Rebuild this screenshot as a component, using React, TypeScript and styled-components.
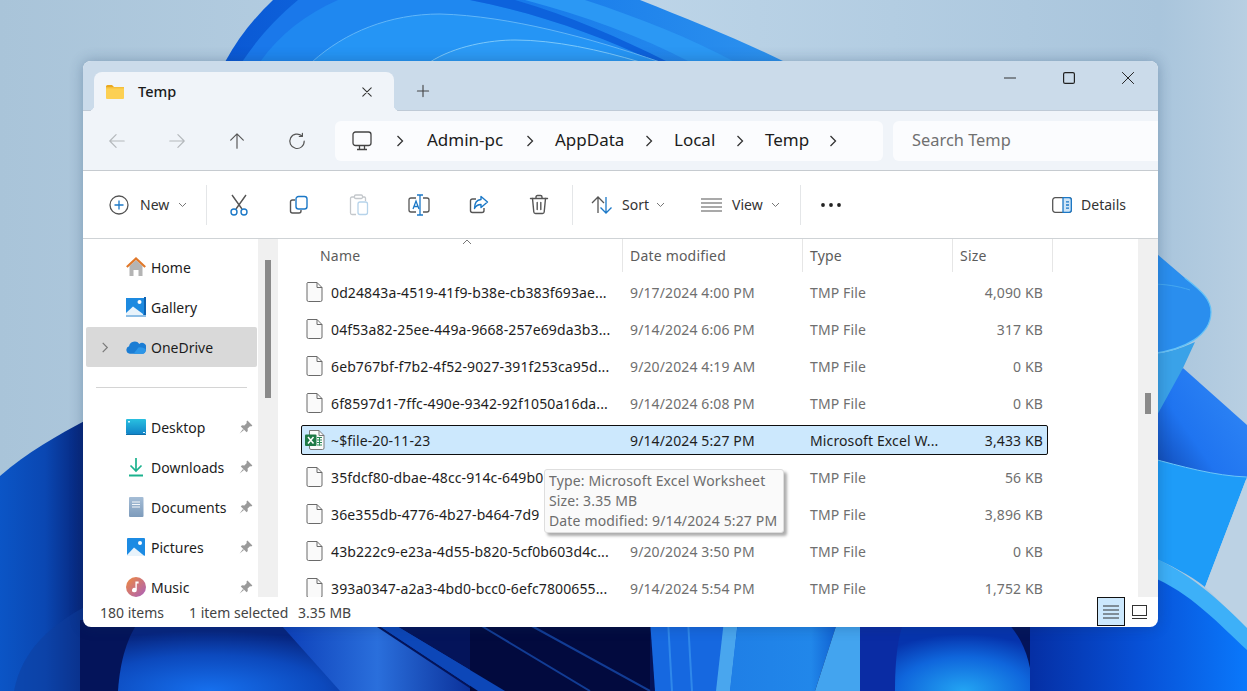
import React from "react";
import styled, { createGlobalStyle } from "styled-components";

const Global = createGlobalStyle`
  html, body { margin: 0; padding: 0; height: 100%; overflow: hidden; }
  body { font-family: "Noto Sans", "Open Sans", sans-serif; font-size: 14px; color: #1c1c1c; }
  * { box-sizing: border-box; }
`;

const Desktop = styled.div`
  position: relative;
  width: 1247px;
  height: 691px;
  overflow: hidden;
  background: #b4cde0;
`;
const WallpaperSvg = styled.svg`
  position: absolute;
  inset: 0;
  display: block;
`;
const Win = styled.div`
  position: absolute;
  left: 83px;
  top: 61px;
  width: 1075px;
  height: 566px;
  border-radius: 8px;
  overflow: hidden;
  background: #fff;
  display: flex;
  flex-direction: column;
  box-shadow: 0 0 14px rgba(20, 50, 90, 0.3);
`;
const TitleBar = styled.div`
  height: 50px;
  flex: none;
  background: #cbdbea;
  border-bottom: 1px solid #bfcad6;
  display: flex;
  align-items: flex-end;
  padding-left: 11px;
`;
const Tab = styled.div`
  position: relative;
  width: 300px;
  height: 39px;
  margin-bottom: -1px;
  background: #f0f4f9;
  border-radius: 8px 8px 0 0;
  display: flex;
  align-items: center;
  padding: 0 20px 0 12px;
  font-size: 14.5px;
  font-weight: 500;
  color: #1a1a1a;
  &::before, &::after {
    content: "";
    position: absolute;
    bottom: 0;
    width: 6px;
    height: 6px;
  }
  &::before { left: -6px; background: radial-gradient(circle at 0 0, transparent 6px, #f0f4f9 6.5px); }
  &::after { right: -6px; background: radial-gradient(circle at 100% 0, transparent 6px, #f0f4f9 6.5px); }
`;
const TabLabel = styled.span`
  margin-left: 14px;
  flex: 1;
  padding-bottom: 2px;
`;
const PlusBox = styled.div`
  margin: 0 0 7px 22px;
  width: 14px;
  height: 24px;
  display: flex;
  align-items: center;
`;
const Controls = styled.div`
  margin-left: auto;
  margin-right: 1px;
  align-self: flex-start;
  display: flex;
`;
const ControlBtn = styled.div`
  width: 59px;
  height: 34px;
  display: flex;
  align-items: center;
  justify-content: center;
`;
const NavBar = styled.div`
  height: 60px;
  flex: none;
  background: #f0f4f9;
  border-bottom: 1px solid #c6cbd0;
  display: flex;
  align-items: center;
  padding-left: 4px;
`;
const NavBtn = styled.div`
  width: 60px;
  height: 40px;
  display: flex;
  align-items: center;
  justify-content: center;
`;
const Address = styled.div`
  margin-left: 8px;
  width: 548px;
  height: 40px;
  background: #fbfcfe;
  border-radius: 6px;
  display: flex;
  align-items: center;
  padding-left: 17px;
  font-size: 17px;
  color: #1c1c1c;
`;
const Crumb = styled.span<{ $w: number }>`
  width: ${(p) => p.$w}px;
  flex: none;
  padding-bottom: 2px;
`;
const CrumbSep = styled.span<{ $w: number }>`
  width: ${(p) => p.$w}px;
  flex: none;
  display: flex;
  justify-content: center;
`;
const Search = styled.div`
  margin-left: 10px;
  flex: 1;
  height: 40px;
  background: #fbfcfe;
  border-radius: 6px 0 0 6px;
  display: flex;
  align-items: center;
  padding: 0 0 2px 19px;
  font-size: 16.4px;
  color: #707070;
`;
const Toolbar = styled.div`
  height: 68px;
  flex: none;
  background: #fff;
  border-bottom: 1px solid #cfd3d6;
  display: flex;
  align-items: center;
  color: #333;
`;
const TextTool = styled.div<{ $w: number; $pad: number; $gap: number }>`
  width: ${(p) => p.$w}px;
  padding-left: ${(p) => p.$pad}px;
  display: flex;
  align-items: center;
  gap: ${(p) => p.$gap}px;
  flex: none;
`;
const ToolCaret = styled.span`
  margin-left: -2px;
  display: flex;
`;
const Divider = styled.div<{ $l?: number; $r?: number }>`
  width: 1px;
  height: 40px;
  background: #e4e6e8;
  margin: 0 ${(p) => p.$r ?? 0}px 0 ${(p) => p.$l ?? 0}px;
  flex: none;
`;
const IconTool = styled.div`
  width: 60px;
  height: 40px;
  display: flex;
  align-items: center;
  justify-content: center;
  flex: none;
`;
const DetailsTool = styled.div`
  margin-left: auto;
  padding-right: 32px;
  display: flex;
  align-items: center;
  gap: 9px;
`;
const Content = styled.div`
  height: 358px;
  flex: none;
  display: flex;
  overflow: hidden;
`;
const Sidebar = styled.div`
  width: 175px;
  flex: none;
  padding-top: 8px;
`;
const SideRow = styled.div<{ $active?: boolean }>`
  position: relative;
  height: 40px;
  margin: 0 1px 0 3px;
  padding-left: 40px;
  display: flex;
  align-items: center;
  gap: 5px;
  border-radius: 2px;
  background: ${(p) => (p.$active ? "#d9d9d9" : "transparent")};
  color: #1c1c1c;
`;
const IconSlot = styled.span`
  width: 20px;
  height: 20px;
  display: flex;
  align-items: center;
  justify-content: center;
  flex: none;
`;
const Expander = styled.span`
  position: absolute;
  left: 15px;
  top: 15px;
  display: flex;
`;
const PinSlot = styled.span`
  margin-left: auto;
  margin-right: 4px;
  display: flex;
`;
const SideSep = styled.div`
  height: 40px;
  display: flex;
  align-items: center;
  padding: 0 11px 0 13px;
  &::after { content: ""; display: block; width: 100%; height: 1px; background: #d4d4d4; }
`;
const ScrollTrack = styled.div`
  width: 20px;
  flex: none;
  background: #f0f0f0;
  position: relative;
`;
const ScrollThumb = styled.div<{ $top: number; $h: number }>`
  position: absolute;
  left: 7px;
  width: 6px;
  top: ${(p) => p.$top}px;
  height: ${(p) => p.$h}px;
  background: #8a8a8a;
`;
const FilePane = styled.div`
  flex: 1;
  position: relative;
  overflow: hidden;
`;
const HeaderRow = styled.div`
  display: grid;
  grid-template-columns: 345px 180px 150px 100px;
  height: 38px;
  align-items: start;
  color: #5c5c5c;
  letter-spacing: 0.2px;
`;
const HeaderCell = styled.div<{ $pad: number }>`
  position: relative;
  height: 33px;
  padding-left: ${(p) => p.$pad}px;
  border-right: 1px solid #e6e6e6;
  display: flex;
  align-items: center;
`;
const SortCaret = styled.svg`
  position: absolute;
  left: 184px;
  top: 0;
`;
const FileRows = styled.div`
  display: flex;
  flex-direction: column;
  gap: 7px;
  margin-left: 23px;
  width: 747px;
  letter-spacing: 0.12px;
`;
const FileRow = styled.div<{ $sel?: boolean }>`
  height: 30px;
  flex: none;
  display: grid;
  grid-template-columns: 329px 180px 150px 88px;
  align-items: center;
  border: 1px solid ${(p) => (p.$sel ? "#0e0e0e" : "transparent")};
  border-radius: 2px;
  background: ${(p) => (p.$sel ? "#cce8fd" : "transparent")};
  color: ${(p) => (p.$sel ? "#1e1e1e" : "#6f6f6f")};
`;
const NameCell = styled.div`
  display: flex;
  align-items: center;
  gap: 8px;
  padding-left: 5px;
  color: #1e1e1e;
  white-space: nowrap;
  margin-left: -1px;
`;
const FileIconSlot = styled.span<{ $shift?: boolean }>`
  width: 17px;
  flex: none;
  display: flex;
  margin-left: ${(p) => (p.$shift ? "-1px" : "0")};
  margin-right: ${(p) => (p.$shift ? "1px" : "0")};
`;
const DateCell = styled.div`
  margin-left: -1px;
  white-space: nowrap;
`;
const SizeCell = styled.div`
  text-align: right;
  padding-right: 6px;
  white-space: nowrap;
`;
const Tooltip = styled.div`
  position: absolute;
  left: 266px;
  top: 230px;
  width: 240px;
  height: 64px;
  padding: 1px 4px;
  background: #fafafa;
  border: 1px solid #dedede;
  border-radius: 3px;
  box-shadow: 3px 3px 3px rgba(0, 0, 0, 0.32);
  color: #6d6d6d;
  line-height: 20px;
  white-space: nowrap;
  letter-spacing: 0.15px;
`;
const StatusBar = styled.div`
  height: 30px;
  flex: none;
  display: flex;
  align-items: center;
  padding-left: 17px;
  color: #444;
`;
const StatusItem = styled.span<{ $w: number }>`
  width: ${(p) => p.$w}px;
  flex: none;
`;
const ViewBtn = styled.div<{ $on?: boolean }>`
  width: 28px;
  height: 29px;
  display: flex;
  align-items: center;
  justify-content: center;
  border: 1px solid ${(p) => (p.$on ? "#111" : "transparent")};
  background: ${(p) => (p.$on ? "#cce8fd" : "transparent")};
`;
const ViewGroup = styled.div`
  margin-left: auto;
  align-self: flex-start;
  display: flex;
  margin-right: 5px;
`;

const Wallpaper = () => (
  <WallpaperSvg width="1247" height="691" viewBox="0 0 1247 691">
    <defs>
      <linearGradient id="bg" x1="0" y1="0" x2="1" y2="0">
        <stop offset="0" stopColor="#a9c4d9" />
        <stop offset="0.5" stopColor="#bdd5e8" />
        <stop offset="0.93" stopColor="#a9c5dc" />
        <stop offset="1" stopColor="#b8cfe2" />
      </linearGradient>
      <linearGradient id="leftB" x1="0" y1="0" x2="1" y2="0">
        <stop offset="0" stopColor="#0b55c6" />
        <stop offset="0.5" stopColor="#0a47b2" />
        <stop offset="1" stopColor="#061f70" />
      </linearGradient>
      <linearGradient id="botR" gradientUnits="userSpaceOnUse" x1="1030" y1="0" x2="1247" y2="0">
        <stop offset="0" stopColor="#052fa4" />
        <stop offset="0.5" stopColor="#0750d6" />
        <stop offset="1" stopColor="#0a78fb" />
      </linearGradient>
      <radialGradient id="blobA" cx="0.4" cy="1" r="0.85">
        <stop offset="0" stopColor="#1670ee" />
        <stop offset="0.6" stopColor="#0c49bd" />
        <stop offset="1" stopColor="#07257f" />
      </radialGradient>
      <radialGradient id="blobB" cx="0.5" cy="1" r="0.8">
        <stop offset="0" stopColor="#23a5f3" />
        <stop offset="0.6" stopColor="#0f66dc" />
        <stop offset="1" stopColor="#0634ad" />
      </radialGradient>
      <linearGradient id="streak" x1="0" y1="0" x2="1" y2="0">
        <stop offset="0" stopColor="#0c3fb8" />
        <stop offset="0.5" stopColor="#2a6fdc" />
        <stop offset="1" stopColor="#0a2f98" />
      </linearGradient>
      <linearGradient id="topOuter" x1="0" y1="0" x2="1" y2="0">
        <stop offset="0" stopColor="#0a58d4" />
        <stop offset="0.5" stopColor="#1578ea" />
        <stop offset="1" stopColor="#2d92ee" />
      </linearGradient>
      <linearGradient id="wedge" x1="0" y1="1" x2="1" y2="0.2">
        <stop offset="0" stopColor="#0d3fa5" />
        <stop offset="0.45" stopColor="#1f74f0" />
        <stop offset="1" stopColor="#2f86f5" />
      </linearGradient>
      <linearGradient id="petal" x1="0" y1="0" x2="1" y2="0">
        <stop offset="0" stopColor="#1f7fe6" />
        <stop offset="0.75" stopColor="#2187ea" />
        <stop offset="1" stopColor="#0f5fd0" />
      </linearGradient>
    </defs>
    <rect width="1247" height="691" fill="url(#bg)" />

    {/* top petals */}
    <path d="M225 62 C238 38 254 18 273 0 L640 0 C690 20 740 40 785 62 Z" fill="url(#topOuter)" />
    <path d="M242 62 C258 38 276 18 298 0 L480 0 L660 62 Z" fill="#1a78ea" />
    <path d="M260 62 C280 34 306 14 338 0 L470 0 C540 14 600 36 660 62 Z" fill="#1f88f0" />
    <path d="M470 0 H515 C570 16 620 38 668 62 H655 C600 36 540 14 470 0Z" fill="#0d62dc" />
    <path d="M525 0 H585 C640 18 690 38 735 62 H690 C640 36 585 16 525 0Z" fill="#2b98f4" />
    <path d="M312 62 C345 32 390 14 440 14 C510 16 590 38 660 62 Z" fill="#2595f5" />
    <path d="M312 62 C345 32 390 14 440 14 C510 16 590 38 660 62" fill="none" stroke="#62b6f8" strokeWidth="1" />
    <path d="M430 62 C455 46 490 40 515 40 C555 40 600 50 640 62 Z" fill="#2c9bf6" />
    <path d="M430 62 C455 46 490 40 515 40 C555 40 600 50 640 62" fill="none" stroke="#7cc8fa" strokeWidth="1" />

    {/* left */}
    <path d="M0 476 C28 452 56 436 90 418 L90 691 L0 691 Z" fill="url(#leftB)" />
    <path d="M14 691 C22 650 50 625 90 604 L90 691 Z" fill="#0d3d9d" opacity="0.5" />

    {/* bottom */}
    <rect x="80" y="620" width="960" height="71" fill="#04145a" />
    <path d="M118 691 C120 660 128 635 140 620 H281 L345 691Z" fill="url(#blobA)" />
    <path d="M281 625 L340 691 L474 691 L374 625 Z" fill="url(#streak)" />
    <path d="M378 625 L478 691 L505 691 L395 625 Z" fill="#0d47b8" />
    <rect x="470" y="620" width="180" height="71" fill="#020a3e" />
    <path d="M378 625 L478 691 L505 691 L395 625 Z" fill="#0d47b8" />
    <path d="M480 625 L590 691 M530 625 L650 691" stroke="#123c94" strokeWidth="2" fill="none" />
    <path d="M650 620 L738 620 L732 691 L655 691 Z" fill="#1668e0" />
    <path d="M668 620 L672 691 M688 620 L692 691" stroke="#2f88ea" strokeWidth="2" />
    <path d="M724 620 H738 L730 691 H716Z" fill="#49a6ee" />
    <path d="M738 620 H838 L815 691 H730Z" fill="url(#petal)" />
    <path d="M838 620 L868 620 L860 691 L815 691 Z" fill="#43a4ef" />
    <path d="M860 620 L913 620 L913 691 L860 691 Z" fill="#0a2ca4" />
    <path d="M895 691 C895 650 900 630 905 620 L1005 620 C1025 640 1032 665 1032 691 Z" fill="url(#blobB)" />

    {/* right */}
    <path d="M1030 691 V620 H1150 V556 C1190 575 1225 605 1247 632 V691 Z" fill="url(#botR)" />
    <path d="M1150 395 L1183 368 L1247 425 L1247 480 L1150 462 Z" fill="url(#wedge)" />
    <path d="M1150 248 L1185 278 C1203 292 1211 300 1211 312 C1211 335 1185 350 1150 354 Z" fill="#2a8eee" />
    <path d="M1150 354 C1165 353 1175 350 1183 347 L1195 342 L1183 368 L1150 428 Z" fill="#3aa2e8" />
    <path d="M1185 278 C1203 292 1211 300 1211 312 C1211 335 1185 350 1150 354" fill="none" stroke="#62c2f8" strokeWidth="1.2" />
    <path d="M1150 284 C1165 284 1178 286 1190 290" fill="none" stroke="#45a8f0" strokeWidth="1" />
    <path d="M1150 458 C1180 466 1215 476 1247 477 L1205 587 C1190 575 1170 565 1150 556 Z" fill="#1e9cf8" />
    <path d="M1150 458 C1180 466 1215 476 1247 477" fill="none" stroke="#6cc6f8" strokeWidth="1" />
    <path d="M1247 477 L1205 587 L1247 628 Z" fill="#bcd2e4" />
    <path d="M1150 556 C1185 570 1220 600 1247 628 L1247 650 C1220 625 1190 592 1150 576 Z" fill="#3db0f8" />
  </WallpaperSvg>
);

type IP = { c?: string };
const Line = ({ d, c = "#5a5a5a", w = 1.3, s = 20 }: { d: string; c?: string; w?: number; s?: number }) => (
  <svg width={s} height={s} viewBox="0 0 20 20" fill="none" stroke={c} strokeWidth={w} strokeLinecap="round" strokeLinejoin="round">
    <path d={d} />
  </svg>
);
const Chevron = ({ c = "#333" }: IP) => (
  <svg width="8" height="12" viewBox="0 0 8 12" fill="none" stroke={c} strokeWidth="1.3"><path d="M1.5 1 L6.5 6 L1.5 11" /></svg>
);
const Caret = () => (
  <svg width="9" height="6" viewBox="0 0 9 6" fill="none" stroke="#777" strokeWidth="1"><path d="M1 1 L4.5 4.5 L8 1" /></svg>
);
const Folder = () => (
  <svg width="18" height="14" viewBox="0 0 18 14">
    <path d="M0 1.5 Q0 0 1.5 0 H6 L8 2 H0Z" fill="#e9a820" />
    <rect x="0" y="2" width="18" height="12" rx="1" fill="#fcd053" />
    <rect x="0" y="2" width="18" height="1.4" fill="#f5bf3a" />
  </svg>
);
const Pin = () => (
  <svg width="14" height="14" viewBox="0 0 14 14" fill="#9a9a9a">
    <path d="M8.4 0.6 L13.4 5.6 L12.2 6.6 L11 6.2 L8.6 8.6 L8.8 11 L7.6 12.2 L1.8 6.4 L3 5.2 L5.4 5.4 L7.8 3 L7.4 1.8Z" />
    <path d="M4 9 L0.6 13.4 L5 10Z" />
  </svg>
);
const HomeIcon = () => (
  <svg width="20" height="20" viewBox="0 0 20 20">
    <path d="M3.5 9 L10 3 L16.5 9 V19 H12.5 V13 H7.5 V19 H3.5Z" fill="#b4b4b4" />
    <path d="M0.8 10 L10 1.5 L19.2 10" fill="none" stroke="#e0782a" strokeWidth="2.2" />
  </svg>
);
const GalleryIcon = () => (
  <svg width="20" height="20" viewBox="0 0 20 20">
    <rect x="0" y="1" width="18" height="17" fill="#1d8ae0" />
    <circle cx="13.5" cy="5" r="2" fill="#fff" />
    <path d="M0 16 L7 9.5 L17 17 V19 H0Z" fill="#e8f3fb" />
    <rect x="18" y="0" width="2" height="20" fill="#0f62b0" />
    <rect x="0" y="18" width="20" height="2" fill="#8fbfe6" />
  </svg>
);
const CloudIcon = () => (
  <svg width="21" height="14" viewBox="0 0 21 14">
    <path d="M4 14 A4 4 0 0 1 3.2 6.2 A6 6 0 0 1 14 3.8 A4.5 4.5 0 0 1 21 9 Q21 14 17 14Z" fill="#1b7dd4" />
    <path d="M8 14 L13 7.5 Q17 6.5 20.5 9 Q21 14 17 14Z" fill="#2c96e8" />
  </svg>
);
const DesktopIcon = () => (
  <svg width="20" height="16" viewBox="0 0 20 16">
    <defs><linearGradient id="dk" x1="0" y1="0" x2="0" y2="1"><stop offset="0" stopColor="#29c0e0" /><stop offset="1" stopColor="#1184c8" /></linearGradient></defs>
    <rect width="20" height="15" rx="1" fill="url(#dk)" />
    <rect x="2" y="2" width="2" height="1.5" fill="#d8f4fb" />
    <rect x="17" y="13" width="2" height="1" fill="#d8f4fb" />
    <rect y="15" width="20" height="1" fill="#0f6fa8" />
  </svg>
);
const DownloadIcon = () => (
  <svg width="16" height="20" viewBox="0 0 16 20" fill="none" stroke="#1cb28e" strokeWidth="1.7">
    <path d="M8 1 V13.5 M2.5 8.5 L8 14 L13.5 8.5" /><path d="M1 18.5 H15" strokeWidth="2" />
  </svg>
);
const DocIcon = () => (
  <svg width="15" height="20" viewBox="0 0 15 20">
    <defs><linearGradient id="dc" x1="0" y1="0" x2="0" y2="1"><stop offset="0" stopColor="#a5bdd6" /><stop offset="1" stopColor="#7d9bbb" /></linearGradient></defs>
    <rect width="14.5" height="20" rx="1" fill="url(#dc)" />
    <path d="M3 5 H11 M3 7.5 H11 M3 10 H11" stroke="#f4f7fa" strokeWidth="1.1" />
  </svg>
);
const PicturesIcon = () => (
  <svg width="18" height="18" viewBox="0 0 18 18">
    <rect width="18" height="18" rx="1" fill="#1c8be3" />
    <circle cx="13" cy="5" r="2" fill="#fff" />
    <path d="M0 17 L7 9.5 L17.5 18 H0Z" fill="#e8f3fb" />
  </svg>
);
const MusicIcon = () => (
  <svg width="20" height="20" viewBox="0 0 20 20">
    <defs><linearGradient id="mu" x1="0" y1="0" x2="1" y2="1"><stop offset="0" stopColor="#f08a3c" /><stop offset="1" stopColor="#a95fbe" /></linearGradient></defs>
    <circle cx="10" cy="10" r="10" fill="url(#mu)" />
    <path d="M9.4 4.5 H12.6 V6.5 H10.8 V13 A2.4 2.2 0 1 1 9.4 11Z" fill="#fff" />
  </svg>
);
const FileIcon = () => (
  <svg width="17" height="20" viewBox="0 0 17 20" fill="#fafafa" stroke="#6a6a6a" strokeWidth="1">
    <path d="M1.5 0.5 H11 L16 5.5 V18 Q16 19.5 14.5 19.5 H2.5 Q1 19.5 1 18 V1Z" />
    <path d="M11 0.5 V5.5 H16" fill="none" />
  </svg>
);
const ExcelIcon = () => (
  <svg width="20" height="20" viewBox="0 0 20 20" style={{ flex: "none" }}>
    <path d="M4.5 0.5 H14 L19 5.5 V18 Q19 19.5 17.5 19.5 H6 Q4.5 19.5 4.5 18Z" fill="#fbfbfb" stroke="#7a7a7a" />
    <path d="M14 0.5 V5.5 H19" fill="none" stroke="#7a7a7a" />
    <path d="M12 7.5 H17 M12 10 H17 M12 12.5 H17 M12 15 H17 M14.5 7 V15.5" stroke="#2b8b57" strokeWidth="1" />
    <rect x="0" y="4.5" width="11.5" height="11.5" rx="1" fill="#1f7a46" />
    <path d="M3 7 L8.5 13.5 M8.5 7 L3 13.5" stroke="#fff" strokeWidth="1.5" />
  </svg>
);

const CutIcon = () => (
  <svg width="20" height="22" viewBox="0 0 20 22" fill="none" strokeWidth="1.4">
    <path d="M3 1 L13 15 M17 1 L7 15" stroke="#555" />
    <circle cx="5" cy="18" r="3" stroke="#1b78c7" />
    <circle cx="15" cy="18" r="3" stroke="#1b78c7" />
  </svg>
);
const CopyIcon = () => (
  <svg width="20" height="20" viewBox="0 0 20 20" fill="none" strokeWidth="1.4">
    <path d="M6 5 H3.5 Q1.5 5 1.5 7 V16 Q1.5 18 3.5 18 H10 Q12 18 12 16 V15" stroke="#555" />
    <rect x="7" y="1.5" width="11" height="12.5" rx="2.5" stroke="#1b78c7" />
  </svg>
);
const PasteIcon = () => (
  <svg width="20" height="22" viewBox="0 0 20 22" fill="none" strokeWidth="1.3">
    <path d="M5 3 H3 Q1.5 3 1.5 4.5 V19 Q1.5 20.5 3 20.5 H7" stroke="#c4c8cc" />
    <path d="M14 3 H15.5 Q16 3 16.5 4 V7" stroke="#c4c8cc" />
    <rect x="5.5" y="1" width="8" height="3.5" rx="1.2" stroke="#c4c8cc" />
    <rect x="9" y="8" width="9.5" height="12.5" rx="2" stroke="#b6d3ea" />
  </svg>
);
const RenameIcon = () => (
  <svg width="22" height="22" viewBox="0 0 22 22" fill="none" strokeWidth="1.3">
    <path d="M8 4 H3 Q1 4 1 6 V16 Q1 18 3 18 H8 M15 4 H19 Q21 4 21 6 V16 Q21 18 19 18 H15" stroke="#555" />
    <path d="M9 1 H15 M9 21 H15 M12 1 V21" stroke="#1b78c7" />
    <path d="M5 15 L8 7 L11 15 M6 12.5 H10" stroke="#1b78c7" />
  </svg>
);
const ShareIcon = () => (
  <svg width="20" height="20" viewBox="0 0 20 20" fill="none" strokeWidth="1.4" strokeLinejoin="round">
    <path d="M7 4 H3.5 Q1.5 4 1.5 6 V15.5 Q1.5 17.5 3.5 17.5 H13 Q15 17.5 15 15.5 V13" stroke="#555" />
    <path d="M12 1.5 L18.5 7 L12 12.5 V9.5 Q7.5 9.5 5.5 13.5 Q5.5 5 12 4.5Z" stroke="#1b78c7" />
  </svg>
);
const TrashIcon = () => (
  <svg width="20" height="21" viewBox="0 0 20 21" fill="none" stroke="#555" strokeWidth="1.4" strokeLinecap="round">
    <path d="M1.5 4.5 H18.5 M7 4.5 V3 Q7 1.5 8.5 1.5 H11.5 Q13 1.5 13 3 V4.5" />
    <path d="M3.5 4.5 L4.8 18 Q5 19.5 6.5 19.5 H13.5 Q15 19.5 15.2 18 L16.5 4.5" />
    <path d="M8.2 8.5 V15.5 M11.8 8.5 V15.5" />
  </svg>
);
const SortIcon = () => (
  <svg width="22" height="20" viewBox="0 0 22 20" fill="none" strokeWidth="1.3">
    <path d="M7 18 V2 M1 8 L7 2 L13 8" stroke="#555" />
    <path d="M15 2 V18 M9.5 12.5 L15 18 L20.5 12.5" stroke="#1b78c7" />
  </svg>
);
const ViewIcon = () => (
  <svg width="21" height="14" viewBox="0 0 21 14" fill="none" stroke="#555" strokeWidth="1.2">
    <path d="M0 1 H21 M0 5 H21 M0 9 H21 M0 13 H21" />
  </svg>
);
const Dots = () => (
  <svg width="22" height="6" viewBox="0 0 22 6" fill="#222">
    <circle cx="3" cy="3" r="1.9" /><circle cx="11" cy="3" r="1.9" /><circle cx="19" cy="3" r="1.9" />
  </svg>
);
const DetailsIcon = () => (
  <svg width="20" height="16" viewBox="0 0 20 16" fill="none" strokeWidth="1.3">
    <rect x="0.7" y="0.7" width="18.6" height="14.6" rx="2.5" stroke="#555" />
    <path d="M11 0.7 H17 Q19.3 0.7 19.3 3 V13 Q19.3 15.3 17 15.3 H11Z" fill="#cfe5f7" stroke="#1b78c7" />
    <path d="M14 4.8 H17 M14 8 H17 M14 11.2 H17" stroke="#1b78c7" />
  </svg>
);
const Monitor = () => (
  <svg width="20" height="20" viewBox="0 0 20 20" fill="none" stroke="#444" strokeWidth="1.3">
    <rect x="1" y="1" width="18" height="13.5" rx="2.5" />
    <path d="M7.5 14.5 V18 M12.5 14.5 V18 M5 18.5 H15" />
  </svg>
);

const sideTop = [
  { label: "Home", icon: <HomeIcon /> },
  { label: "Gallery", icon: <GalleryIcon /> },
  { label: "OneDrive", icon: <CloudIcon />, active: true },
];
const sidePinned = [
  { label: "Desktop", icon: <DesktopIcon /> },
  { label: "Downloads", icon: <DownloadIcon /> },
  { label: "Documents", icon: <DocIcon /> },
  { label: "Pictures", icon: <PicturesIcon /> },
  { label: "Music", icon: <MusicIcon /> },
];
const files = [
  { n: "0d24843a-4519-41f9-b38e-cb383f693ae...", d: "9/17/2024 4:00 PM", t: "TMP File", s: "4,090 KB" },
  { n: "04f53a82-25ee-449a-9668-257e69da3b3...", d: "9/14/2024 6:06 PM", t: "TMP File", s: "317 KB" },
  { n: "6eb767bf-f7b2-4f52-9027-391f253ca95d...", d: "9/20/2024 4:19 AM", t: "TMP File", s: "0 KB" },
  { n: "6f8597d1-7ffc-490e-9342-92f1050a16da...", d: "9/14/2024 6:08 PM", t: "TMP File", s: "0 KB" },
  { n: "~$file-20-11-23", d: "9/14/2024 5:27 PM", t: "Microsoft Excel W...", s: "3,433 KB", sel: true },
  { n: "35fdcf80-dbae-48cc-914c-649b0", d: "", t: "TMP File", s: "56 KB" },
  { n: "36e355db-4776-4b27-b464-7d9", d: "", t: "TMP File", s: "3,896 KB" },
  { n: "43b222c9-e23a-4d55-b820-5cf0b603d4c...", d: "9/20/2024 3:50 PM", t: "TMP File", s: "0 KB" },
  { n: "393a0347-a2a3-4bd0-bcc0-6efc7800655...", d: "9/14/2024 5:54 PM", t: "TMP File", s: "1,752 KB" },
];

export default function App() {
  return (
    <Desktop>
      <Global />
      <Wallpaper />
      <Win>
        <TitleBar>
          <Tab>
            <Folder />
            <TabLabel>Temp</TabLabel>
            <Line s={14} c="#333" w={1.5} d="M4 4 L16 16 M16 4 L4 16" />
          </Tab>
          <PlusBox><Line s={14} c="#444" w={1.6} d="M10 2 V18 M2 10 H18" /></PlusBox>
          <Controls>
            <ControlBtn><Line s={14} c="#222" w={1.3} d="M2 10 H18" /></ControlBtn>
            <ControlBtn><svg width="12" height="12" viewBox="0 0 12 12" fill="none" stroke="#222" strokeWidth="1.2"><rect x="0.6" y="0.6" width="10.8" height="10.8" rx="1.5" /></svg></ControlBtn>
            <ControlBtn><Line s={14} c="#222" w={1.4} d="M2 2 L18 18 M18 2 L2 18" /></ControlBtn>
          </Controls>
        </TitleBar>
        <NavBar>
          <NavBtn><Line s={18} c="#b4b8bc" d="M18 10 H2 M9 3 L2 10 L9 17" /></NavBtn>
          <NavBtn><Line s={18} c="#b4b8bc" d="M2 10 H18 M11 3 L18 10 L11 17" /></NavBtn>
          <NavBtn><Line s={18} c="#555" d="M10 18 V2 M3 9 L10 2 L17 9" /></NavBtn>
          <NavBtn><Line s={18} c="#555" d="M15.5 4.5 A8 8 0 1 0 18 10 M16 1.5 V5 H12.5" /></NavBtn>
          <Address>
            <Monitor />
            <CrumbSep $w={55}><Chevron /></CrumbSep>
            <Crumb $w={77}>Admin-pc</Crumb>
            <CrumbSep $w={51}><Chevron /></CrumbSep>
            <Crumb $w={68}>AppData</Crumb>
            <CrumbSep $w={51}><Chevron /></CrumbSep>
            <Crumb $w={40}>Local</Crumb>
            <CrumbSep $w={51}><Chevron /></CrumbSep>
            <Crumb $w={42}>Temp</Crumb>
            <CrumbSep $w={52}><Chevron /></CrumbSep>
          </Address>
          <Search>Search Temp</Search>
        </NavBar>
        <Toolbar>
          <TextTool $w={123} $pad={26} $gap={11}>
            <svg width="20" height="20" viewBox="0 0 20 20" fill="none" strokeWidth="1.3">
              <circle cx="10" cy="10" r="9" stroke="#555" />
              <path d="M10 5.5 V14.5 M5.5 10 H14.5" stroke="#1b78c7" />
            </svg>
            <span>New</span>
            <ToolCaret><Caret /></ToolCaret>
          </TextTool>
          <Divider $r={2} />
          <IconTool><CutIcon /></IconTool>
          <IconTool><CopyIcon /></IconTool>
          <IconTool><PasteIcon /></IconTool>
          <IconTool><RenameIcon /></IconTool>
          <IconTool><ShareIcon /></IconTool>
          <IconTool><TrashIcon /></IconTool>
          <Divider $l={3} />
          <TextTool $w={110} $pad={18} $gap={9}>
            <SortIcon />
            <span>Sort</span>
            <ToolCaret><Caret /></ToolCaret>
          </TextTool>
          <TextTool $w={117} $pad={18} $gap={10}>
            <ViewIcon />
            <span>View</span>
            <ToolCaret><Caret /></ToolCaret>
          </TextTool>
          <Divider />
          <IconTool><Dots /></IconTool>
          <DetailsTool>
            <DetailsIcon />
            <span>Details</span>
          </DetailsTool>
        </Toolbar>
        <Content>
          <Sidebar>
            {sideTop.map((r) => (
              <SideRow key={r.label} $active={r.active}>
                {r.active && <Expander><svg width="8" height="11" viewBox="0 0 8 12" fill="none" stroke="#7a7a7a" strokeWidth="1.3"><path d="M1.5 1 L6.5 6 L1.5 11" /></svg></Expander>}
                <IconSlot>{r.icon}</IconSlot>
                <span>{r.label}</span>
              </SideRow>
            ))}
            <SideSep />
            {sidePinned.map((r) => (
              <SideRow key={r.label}>
                <IconSlot>{r.icon}</IconSlot>
                <span>{r.label}</span>
                <PinSlot><Pin /></PinSlot>
              </SideRow>
            ))}
          </Sidebar>
          <ScrollTrack><ScrollThumb $top={21} $h={138} /></ScrollTrack>
          <FilePane>
            <HeaderRow>
              <HeaderCell $pad={42}>
                Name
                <SortCaret width="10" height="6" viewBox="0 0 10 6" fill="none" stroke="#777" strokeWidth="1"><path d="M1 5 L5 1 L9 5" /></SortCaret>
              </HeaderCell>
              <HeaderCell $pad={7}>Date modified</HeaderCell>
              <HeaderCell $pad={7}>Type</HeaderCell>
              <HeaderCell $pad={7}>Size</HeaderCell>
            </HeaderRow>
            <FileRows>
              {files.map((f) => (
                <FileRow key={f.n} $sel={f.sel}>
                  <NameCell>
                    <FileIconSlot $shift={f.sel}>{f.sel ? <ExcelIcon /> : <FileIcon />}</FileIconSlot>
                    <span>{f.n}</span>
                  </NameCell>
                  <DateCell>{f.d}</DateCell>
                  <DateCell>{f.t}</DateCell>
                  <SizeCell>{f.s}</SizeCell>
                </FileRow>
              ))}
            </FileRows>
            <Tooltip>
              <div>Type: Microsoft Excel Worksheet</div>
              <div>Size: 3.35 MB</div>
              <div>Date modified: 9/14/2024 5:27 PM</div>
            </Tooltip>
          </FilePane>
          <ScrollTrack><ScrollThumb $top={154} $h={21} /></ScrollTrack>
        </Content>
        <StatusBar>
          <StatusItem $w={89}>180 items</StatusItem>
          <StatusItem $w={109}>1 item selected</StatusItem>
          <span>3.35 MB</span>
          <ViewGroup>
            <ViewBtn $on><svg width="16" height="14" viewBox="0 0 16 14" fill="none" stroke="#333" strokeWidth="1"><path d="M0 1 H16 M0 5 H16 M0 9 H16 M0 13 H16" /></svg></ViewBtn>
            <ViewBtn><svg width="15" height="14" viewBox="0 0 15 14" fill="none" stroke="#333" strokeWidth="1"><rect x="0.5" y="0.5" width="14" height="10" /><path d="M0 13.5 H15" /></svg></ViewBtn>
          </ViewGroup>
        </StatusBar>
      </Win>
    </Desktop>
  );
}
